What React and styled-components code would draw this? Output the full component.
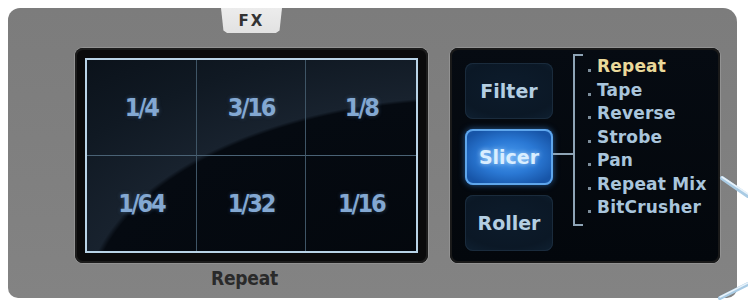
import styled, { createGlobalStyle } from "styled-components";

const GlobalStyle = createGlobalStyle`
  html, body {
    margin: 0;
    padding: 0;
    background: #ffffff;
  }
  body {
    font-family: "DejaVu Sans Condensed", "DejaVu Sans", sans-serif;
  }
`;

const pads = ["1/4", "3/16", "1/8", "1/64", "1/32", "1/16"];
const buttons = [
  { label: "Filter", active: false },
  { label: "Slicer", active: true },
  { label: "Roller", active: false },
];
const modes = ["Repeat", "Tape", "Reverse", "Strobe", "Pan", "Repeat Mix", "BitCrusher"];

const App = () => {
  return (
    <Page>
      <GlobalStyle />
      <Panel>
        <PadColumn>
          <Tab>FX</Tab>
          <Frame>
            <PadGrid>
              {pads.map((p) => (
                <Pad key={p}>{p}</Pad>
              ))}
            </PadGrid>
          </Frame>
          <Caption>Repeat</Caption>
        </PadColumn>
        <ModeFrame>
          <ButtonStack>
            {buttons.map((b) => (
              <ModeButton key={b.label} $active={b.active}>
                {b.label}
              </ModeButton>
            ))}
          </ButtonStack>
          <Connector />
          <ModeList>
            {modes.map((m, i) => (
              <ModeItem key={m} $selected={i === 0}>
                {m}
              </ModeItem>
            ))}
          </ModeList>
        </ModeFrame>
      </Panel>
      <Cables width="30" height="301" viewBox="0 0 30 301">
        <path d="M4 178 L30 196" stroke="#a9cbe4" strokeWidth="4" strokeLinecap="round" />
        <path d="M4 177 L30 194" stroke="#e8f2fa" strokeWidth="1.5" strokeLinecap="round" />
        <path d="M2 298 L30 284" stroke="#a9cbe4" strokeWidth="4" strokeLinecap="round" />
        <path d="M2 297 L30 283" stroke="#e8f2fa" strokeWidth="1.5" strokeLinecap="round" />
      </Cables>
    </Page>
  );
};

const Page = styled.div`
  position: relative;
  width: 748px;
  height: 301px;
  padding: 8px 11px 3px 8px;
  box-sizing: border-box;
  overflow: hidden;
`;

const Panel = styled.div`
  display: flex;
  align-items: flex-start;
  height: 100%;
  padding: 0 17px 0 67px;
  box-sizing: border-box;
  background: linear-gradient(180deg, #7c7c7c 0%, #808080 60%, #838383 100%);
  border-radius: 12px 14px 10px 10px;
  font-weight: 700;
`;

const PadColumn = styled.div`
  display: flex;
  flex-direction: column;
  align-items: center;
  width: 353px;
`;

const Tab = styled.div`
  width: 61px;
  height: 25px;
  display: flex;
  align-items: center;
  justify-content: center;
  background: linear-gradient(180deg, #ececec 0%, #e2e2e2 100%);
  clip-path: polygon(0 0, 100% 0, 96% 90%, 90% 100%, 10% 100%, 4% 90%);
  font-family: "DejaVu Sans", sans-serif;
  font-size: 15px;
  font-weight: 700;
  letter-spacing: 2px;
  color: #333;
`;

const Frame = styled.div`
  margin-top: 15px;
  width: 100%;
  height: 215px;
  padding: 10px;
  box-sizing: border-box;
  background: #0a0a0b;
  border-radius: 8px;
  box-shadow: 0 0 0 1px #929292, inset 0 0 0 2px #1c1c1c;
`;

const PadGrid = styled.div`
  display: grid;
  grid-template-columns: repeat(3, 1fr);
  grid-template-rows: repeat(2, 1fr);
  height: 100%;
  border: 2px solid #b9d3e6;
  box-sizing: border-box;
  background:
    radial-gradient(ellipse 620px 330px at 118% 128%, #03070c 0%, #050a11 62%, #18222e 63%, #101923 80%, #0a1119 100%);
`;

const Pad = styled.div`
  display: flex;
  align-items: center;
  justify-content: center;
  border-right: 1px solid #3f5566;
  border-bottom: 1px solid #4a6275;
  color: #83a8d2;
  font-size: 25px;
  font-weight: 700;
  letter-spacing: -2.2px;
  text-shadow: 0 0 4px rgba(110, 160, 220, 0.35);

  &:nth-child(3n) {
    border-right: none;
  }
  &:nth-child(n + 4) {
    border-bottom: none;
  }
`;

const Caption = styled.div`
  margin-top: 3px;
  padding-right: 14px;
  color: #2a2a2a;
  font-size: 19px;
  font-weight: 700;
  line-height: 24px;
  letter-spacing: -0.2px;
`;

const ModeFrame = styled.div`
  display: flex;
  align-items: flex-start;
  margin: 40px 0 0 22px;
  width: 270px;
  height: 215px;
  padding: 6px 8px 0 15px;
  box-sizing: border-box;
  background: linear-gradient(180deg, #060b12 0%, #03070c 100%);
  border-radius: 8px;
  box-shadow: 0 0 0 1px #929292, inset 0 0 0 2px #1a1a1a;
`;

const ButtonStack = styled.div`
  display: flex;
  flex-direction: column;
  gap: 10px;
  margin-top: 9px;
  width: 88px;
`;

const ModeButton = styled.div`
  height: 56px;
  display: flex;
  align-items: center;
  justify-content: center;
  border-radius: 8px;
  font-family: "DejaVu Sans", sans-serif;
  font-size: 19px;
  font-weight: 700;
  color: ${(p) => (p.$active ? "#d9eeff" : "#b4cee2")};
  background: ${(p) =>
    p.$active
      ? "radial-gradient(ellipse 60% 55% at 50% 50%, #4a9cf0 0%, #2a78d4 55%, #1755a8 100%)"
      : "radial-gradient(ellipse 80% 70% at 50% 45%, #0d1c2c 0%, #0b1826 70%, #0f2031 100%)"};
  box-shadow: ${(p) =>
    p.$active
      ? "inset 0 0 0 2px #5ea6ec, 0 0 6px rgba(60, 140, 230, 0.6)"
      : "inset 0 0 0 1px #1a2b3c"};
  text-shadow: ${(p) => (p.$active ? "0 0 5px rgba(200, 230, 255, 0.8)" : "none")};
`;

const Connector = styled.div`
  width: 20px;
  height: 2px;
  margin-top: 99px;
  background: #8ea4b6;
`;

const ModeList = styled.ul`
  position: relative;
  list-style: none;
  margin: 0;
  padding: 1px 0 5px 22px;
  border-left: 2px solid #8ea4b6;
  box-sizing: border-box;
  height: 172px;

  &::before,
  &::after {
    content: "";
    position: absolute;
    left: 0;
    width: 8px;
    height: 2px;
    background: #8ea4b6;
  }
  &::before {
    top: 0;
  }
  &::after {
    bottom: 0;
  }
`;

const ModeItem = styled.li`
  position: relative;
  height: 23.5px;
  line-height: 23.5px;
  font-family: "DejaVu Sans", sans-serif;
  font-size: 17px;
  font-weight: 700;
  letter-spacing: 0.2px;
  white-space: nowrap;
  color: ${(p) => (p.$selected ? "#ead99a" : "#a9c5dc")};

  &::before {
    content: "";
    position: absolute;
    left: -9px;
    top: 14px;
    width: 3px;
    height: 3px;
    background: #7d8e9c;
  }
`;

const Cables = styled.svg`
  position: absolute;
  right: 0;
  top: 0;
`;

export default App;
